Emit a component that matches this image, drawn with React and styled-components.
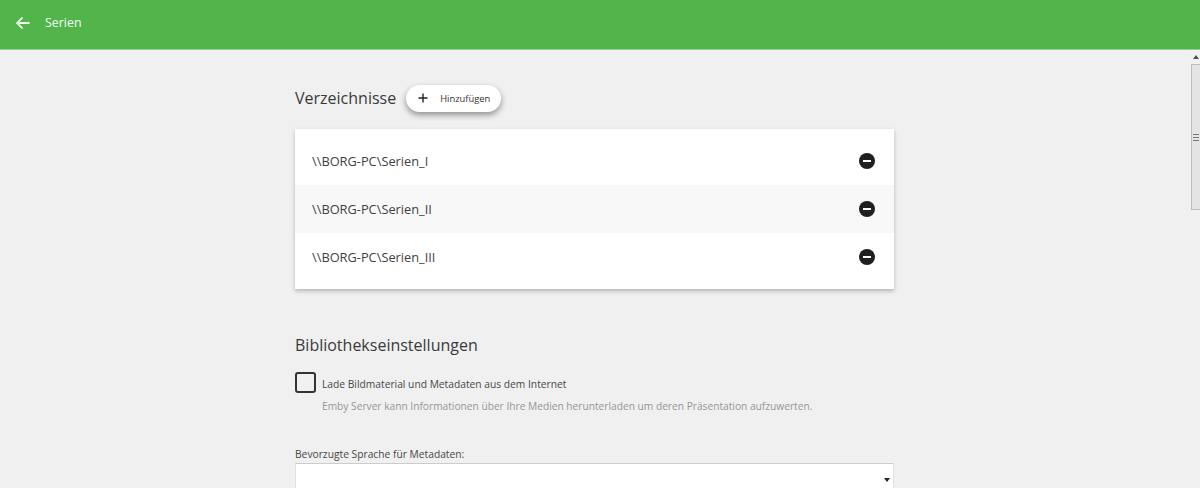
import styled, { createGlobalStyle } from 'styled-components';
import { HiArrowLeft } from 'react-icons/hi2';

const folders = ['\\\\BORG-PC\\Serien_I', '\\\\BORG-PC\\Serien_II', '\\\\BORG-PC\\Serien_III'];

const GlobalStyle = createGlobalStyle`
  html, body {
    margin: 0;
    height: 100%;
    overflow: hidden;
    background: #f0f0f0;
    font-family: 'Open Sans', 'Noto Sans', sans-serif;
  }
`;

const Page = styled.div`
  width: 1200px;
  height: 488px;
  display: flex;
  flex-direction: column;
  overflow: hidden;
`;

const Header = styled.header`
  flex: none;
  height: 45px;
  display: flex;
  align-items: center;
  gap: 14px;
  padding: 0 0 4px 15px;
  background: #52b54b;
  border-bottom: 1px solid #8fd08a;
  color: #f4fbf3;
  font-size: 12.4px;
`;

const BackIcon = styled(HiArrowLeft)`
  width: 16px;
  height: 16px;
  stroke-width: 1.4;
`;

const Body = styled.div`
  flex: 1;
  min-height: 0;
  display: flex;
`;

const Main = styled.main`
  flex: 1;
  padding: 0 0 0 295px;
`;

const Column = styled.div`
  width: 599px;
`;

const TitleRow = styled.div`
  display: flex;
  align-items: center;
  gap: 10px;
  margin-top: 34px;
`;

const Title = styled.h2`
  margin: 0;
  font-size: 16px;
  font-weight: 400;
  line-height: 28px;
  color: #3a3a3a;
`;

const AddButton = styled.button`
  height: 27px;
  width: 95px;
  padding: 0 0 0 12px;
  display: flex;
  align-items: center;
  gap: 12px;
  box-sizing: border-box;
  border: 0;
  border-radius: 14px;
  background: #fff;
  color: #333;
  font-family: inherit;
  font-size: 9.4px;
  box-shadow: 0 3px 6px rgba(0, 0, 0, 0.4);
`;

const PlusIcon = styled.svg`
  width: 10px;
  height: 10px;
  flex: none;
`;

const Card = styled.div`
  margin-top: 17px;
  padding: 8px 0;
  background: #fff;
  box-shadow: 0 2px 4px rgba(0, 0, 0, 0.25);
`;

const FolderRow = styled.div`
  height: 48px;
  display: flex;
  align-items: center;
  justify-content: space-between;
  padding: 0 19px 0 17px;
  background: ${(props) => (props.$alt ? '#f8f8f8' : '#fff')};
  color: #3f3f3f;
  font-size: 12.8px;
`;

const RemoveIcon = styled.svg`
  width: 16px;
  height: 16px;
  flex: none;
`;

const SectionTitle = styled(Title)`
  margin-top: 42px;
`;

const CheckRow = styled.div`
  display: flex;
  align-items: center;
  gap: 6px;
  margin-top: 13px;
`;

const CheckBox = styled.span`
  width: 17px;
  height: 17px;
  border: 2px solid #333;
  border-radius: 3px;
`;

const CheckLabel = styled.span`
  padding-top: 3px;
  font-size: 10.25px;
  color: #484848;
`;

const Hint = styled.div`
  margin: 6px 0 0 27px;
  font-size: 10.2px;
  line-height: 14px;
  color: #969696;
`;

const FieldLabel = styled.div`
  margin-top: 34px;
  font-size: 10.25px;
  line-height: 14px;
  color: #484848;
`;

const Select = styled.div`
  position: relative;
  height: 60px;
  margin-top: 2px;
  background: #fff;
  border: 1px solid #e2e2e2;
  border-top: 1px solid #ccc;
  box-sizing: border-box;
`;

const Caret = styled.span`
  position: absolute;
  right: 3px;
  top: 14px;
  border-left: 3px solid transparent;
  border-right: 3px solid transparent;
  border-top: 4px solid #222;
`;

const Scrollbar = styled.div`
  flex: none;
  width: 9px;
  display: flex;
  flex-direction: column;
  background: #f1f1f1;
`;

const ScrollArrow = styled.div`
  height: 14px;
  display: flex;
  justify-content: center;
  align-items: center;
  &::before {
    content: '';
    border-left: 3px solid transparent;
    border-right: 3px solid transparent;
    border-bottom: 4px solid #505050;
  }
`;

const ScrollThumb = styled.div`
  height: 146px;
  display: flex;
  align-items: center;
  justify-content: center;
  box-sizing: border-box;
  background: #e4e4e4;
  border: 1px solid #bdbdbd;
  border-right: 0;
`;

const ScrollGrip = styled.div`
  width: 6px;
  height: 5px;
  border-top: 1px solid #777;
  border-bottom: 1px solid #777;
  position: relative;
  &::after {
    content: '';
    position: absolute;
    left: 0;
    right: 0;
    top: 2px;
    border-top: 1px solid #777;
  }
`;

export default function App() {
  return (
    <Page>
      <GlobalStyle />
      <Header>
        <BackIcon />
        <span>Serien</span>
      </Header>
      <Body>
        <Main>
          <Column>
            <TitleRow>
              <Title>Verzeichnisse</Title>
              <AddButton>
                <PlusIcon viewBox="0 0 10 10">
                  <path d="M5 .5v9M.5 5h9" stroke="#222" strokeWidth="1.4" />
                </PlusIcon>
                Hinzufügen
              </AddButton>
            </TitleRow>
            <Card>
              {folders.map((path, i) => (
                <FolderRow key={path} $alt={i === 1}>
                  <span>{path}</span>
                  <RemoveIcon viewBox="0 0 16 16">
                    <circle cx="8" cy="8" r="8" fill="#1f1f1f" />
                    <rect x="4" y="7" width="8" height="2" fill="#fff" />
                  </RemoveIcon>
                </FolderRow>
              ))}
            </Card>
            <SectionTitle>Bibliothekseinstellungen</SectionTitle>
            <CheckRow>
              <CheckBox />
              <CheckLabel>Lade Bildmaterial und Metadaten aus dem Internet</CheckLabel>
            </CheckRow>
            <Hint>
              Emby Server kann Informationen über Ihre Medien herunterladen um deren Präsentation aufzuwerten.
            </Hint>
            <FieldLabel>Bevorzugte Sprache für Metadaten:</FieldLabel>
            <Select>
              <Caret />
            </Select>
          </Column>
        </Main>
        <Scrollbar>
          <ScrollArrow />
          <ScrollThumb>
            <ScrollGrip />
          </ScrollThumb>
        </Scrollbar>
      </Body>
    </Page>
  );
}
